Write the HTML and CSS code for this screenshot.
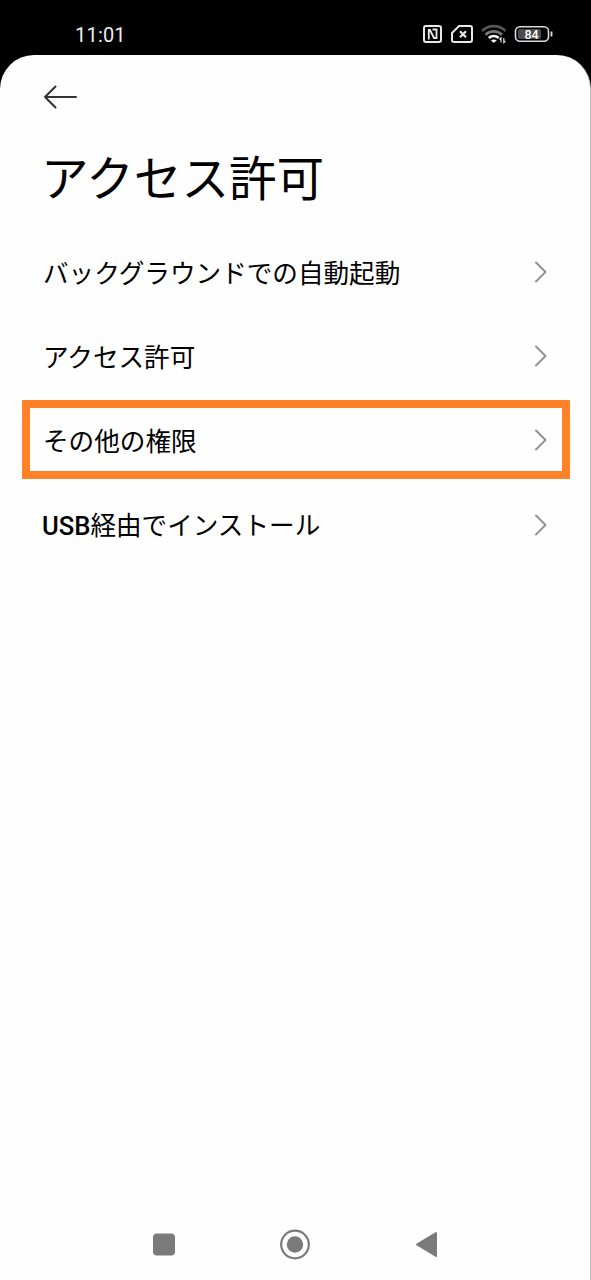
FILE: index.html
```html
<!DOCTYPE html>
<html lang="ja">
<head>
<meta charset="utf-8">
<title>アクセス許可</title>
<link rel="stylesheet" href="styles.css">
</head>
<body>
<div class="phone">
  <header class="status">
    <span class="time">11:01</span>
    <svg class="status-icons" width="134" height="24" viewBox="0 0 134 24" fill="none">
      <g stroke="#e8e8e8" stroke-width="2">
        <rect x="5" y="4" width="17" height="16" rx="2"/>
        <path d="M9.800 17.500V8h1.200l4 8h2.500V7.500H13.500" stroke-width="1.800"/>
        <path d="M40 4H51a2 2 0 0 1 2 2V18a2 2 0 0 1-2 2H35a2 2 0 0 1-2-2V11z"/>
        <path d="M41 9.200l6 6M47 9.200l-6 6" stroke-width="2.200"/>
      </g>
      <g stroke-width="2.600">
        <path d="M63 9a16.500 16.500 0 0 1 23.500 0" stroke="#555"/>
        <path d="M66.500 12.700a12 12 0 0 1 16.500 0" stroke="#777"/>
        <path d="M69.800 16a7 7 0 0 1 9.900 0" stroke="#f2f2f2"/>
      </g>
      <path d="M71.800 18.300q3-1.800 6 0l-3 2.700z" fill="#f2f2f2"/>
      <path d="M82 20.500v-4.500l-1.500 1.500M84.800 16v4.500l1.500-1.500" stroke="#ddd" stroke-width="1.200"/>
      <rect x="96.500" y="4.700" width="33" height="14.600" rx="4.500" stroke="#dcdcdc" stroke-width="1.600"/>
      <rect x="99" y="7" width="23" height="10" rx="2" fill="#4c4c4c"/>
      <path d="M132.500 9.500v5" stroke="#ddd" stroke-width="1.800"/>
      <text class="battery" x="112.600" y="16.500" text-anchor="middle">84</text>
    </svg>
  </header>
  <main class="sheet">
    <svg class="back" width="36" height="26" viewBox="0 0 36 26" fill="none" stroke="#333" stroke-width="2" stroke-linecap="round" stroke-linejoin="round">
      <path d="M33 13H2M12.500 2.500L2 13l10.500 10.500"/>
    </svg>
    <h1 class="title">アクセス許可</h1>
    <ul class="list">
      <li class="row"><span>バックグラウンドでの自動起動</span><svg class="chevron" viewBox="0 0 14 22"><path d="M2 1.500L11.500 11 2 20.500"/></svg></li>
      <li class="row"><span>アクセス許可</span><svg class="chevron" viewBox="0 0 14 22"><path d="M2 1.500L11.500 11 2 20.500"/></svg></li>
      <li class="row marked"><span>その他の権限</span><svg class="chevron" viewBox="0 0 14 22"><path d="M2 1.500L11.500 11 2 20.500"/></svg></li>
      <li class="row"><span><span class="latin">USB</span>経由でインストール</span><svg class="chevron" viewBox="0 0 14 22"><path d="M2 1.500L11.500 11 2 20.500"/></svg></li>
    </ul>
    <nav class="nav">
      <svg width="30" height="32" viewBox="0 0 30 32"><rect x="4" y="4.500" width="22" height="22" rx="4" fill="#7a7a7a"/></svg>
      <svg width="32" height="32" viewBox="0 0 32 32"><circle cx="16" cy="15.500" r="13.800" fill="none" stroke="#7a7a7a" stroke-width="2.200"/><circle cx="16" cy="15.500" r="8.200" fill="#7a7a7a"/></svg>
      <svg width="30" height="32" viewBox="0 0 30 32"><path d="M6 15.500L25 4v23z" fill="#7a7a7a" stroke="#7a7a7a" stroke-width="2" stroke-linejoin="round"/></svg>
    </nav>
  </main>
</div>
</body>
</html>
```
FILE: styles.css
```css
*, *::before, *::after { box-sizing: border-box; }
body {
  margin: 0;
  background: #000;
  color: #000;
  font-family: "Noto Sans CJK JP", sans-serif;
}
.phone {
  width: 591px;
  height: 1280px;
  display: flex;
  flex-direction: column;
}
.status {
  flex: none;
  height: 55px;
  padding: 14px 38px 0 75px;
  display: flex;
  justify-content: space-between;
  align-items: flex-start;
}
.time {
  color: #ececec;
  font: 400 20px/42px Roboto, sans-serif;
  letter-spacing: 0.2px;
}
.status-icons { margin-top: 8px; }
.battery {
  fill: #fff;
  font: 500 12.5px Roboto, sans-serif;
}
.sheet {
  flex: 1;
  display: flex;
  flex-direction: column;
  background: #fefefe;
  border-right: 1px solid #bbb;
  border-radius: 34px 34px 0 0;
}
.back {
  flex: none;
  margin: 29px 0 0 43px;
}
.title {
  margin: 31px 0 0 41px;
  height: 70px;
  font-size: 47.6px;
  line-height: 70px;
  font-weight: 400;
}
.list {
  list-style: none;
  margin: 19px 0 0;
  padding: 0;
}
.row {
  position: relative;
  height: 84.200px;
  padding: 0 42px 0 43px;
  display: flex;
  align-items: center;
  justify-content: space-between;
  font-size: 25.600px;
  line-height: 38px;
}
.latin {
  margin-left: -1px;
  font-family: Roboto, sans-serif;
  font-weight: 500;
  font-size: 25.600px;
}
.chevron {
  width: 14px;
  height: 22px;
  fill: none;
  stroke: #929292;
  stroke-width: 2;
  stroke-linecap: round;
  stroke-linejoin: round;
}
.marked::after {
  content: "";
  position: absolute;
  left: 22px;
  top: 2px;
  width: 548px;
  height: 79px;
  border: 8px solid #ff8229;
}
.nav {
  margin-top: auto;
  height: 71px;
  padding: 0 149px;
  display: flex;
  align-items: center;
  justify-content: space-between;
}
```
